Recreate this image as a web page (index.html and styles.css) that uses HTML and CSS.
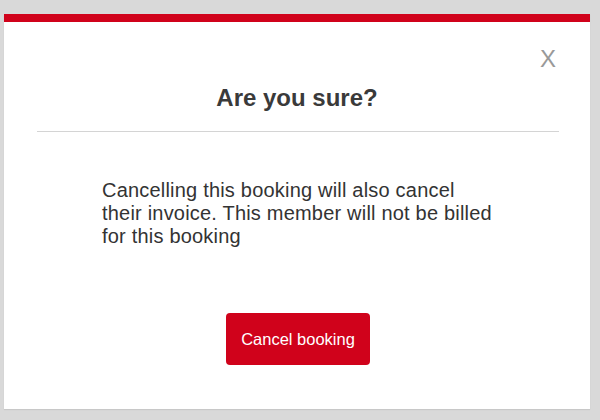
FILE: index.html
```html
<!DOCTYPE html>
<html>
<head>
<meta charset="utf-8">
<link rel="stylesheet" href="styles.css">
</head>
<body>
<div class="modal">
  <div class="close-row"><span class="close">X</span></div>
  <h1 class="title">Are you sure?</h1>
  <hr class="divider">
  <p class="message">Cancelling this booking will also cancel their invoice. This member will not be billed for this booking</p>
  <div class="actions"><button class="btn">Cancel booking</button></div>
</div>
</body>
</html>
```
FILE: styles.css
```css
html, body {
  margin: 0;
  padding: 0;
}
body {
  background: #d9d9d9;
  width: 600px;
  height: 420px;
  padding: 14px 0 0 4px;
  box-sizing: border-box;
  font-family: "Liberation Sans", Arial, sans-serif;
}
.modal {
  width: 586px;
  height: 395px;
  box-sizing: border-box;
  background: #fff;
  border-top: 8px solid #d0021b;
  box-shadow: 0 1px 1px rgba(0,0,0,0.08);
}
.close-row {
  display: flex;
  justify-content: flex-end;
  padding: 23px 34px 0 0;
}
.close {
  font-size: 24px;
  line-height: 28px;
  color: #999;
}
.title {
  margin: 11px 0 0;
  text-align: center;
  font-size: 24px;
  line-height: 28px;
  font-weight: bold;
  color: #3a3a3a;
}
.divider {
  margin: 19px 31px 0 33px;
  border: 0;
  height: 1px;
  background: #d4d4d4;
}
.message {
  margin: 47px 0 0 98px;
  width: 394px;
  font-size: 20px;
  letter-spacing: 0.2px;
  line-height: 23px;
  color: #333;
}
.actions {
  display: flex;
  justify-content: center;
  margin-top: 65px;
}
.btn {
  width: 144px;
  height: 52px;
  margin-left: 2px;
  border: 0;
  border-radius: 4px;
  background: #d0021b;
  color: #fff;
  font-family: "Liberation Sans", Arial, sans-serif;
  font-size: 16.5px;
}
```
